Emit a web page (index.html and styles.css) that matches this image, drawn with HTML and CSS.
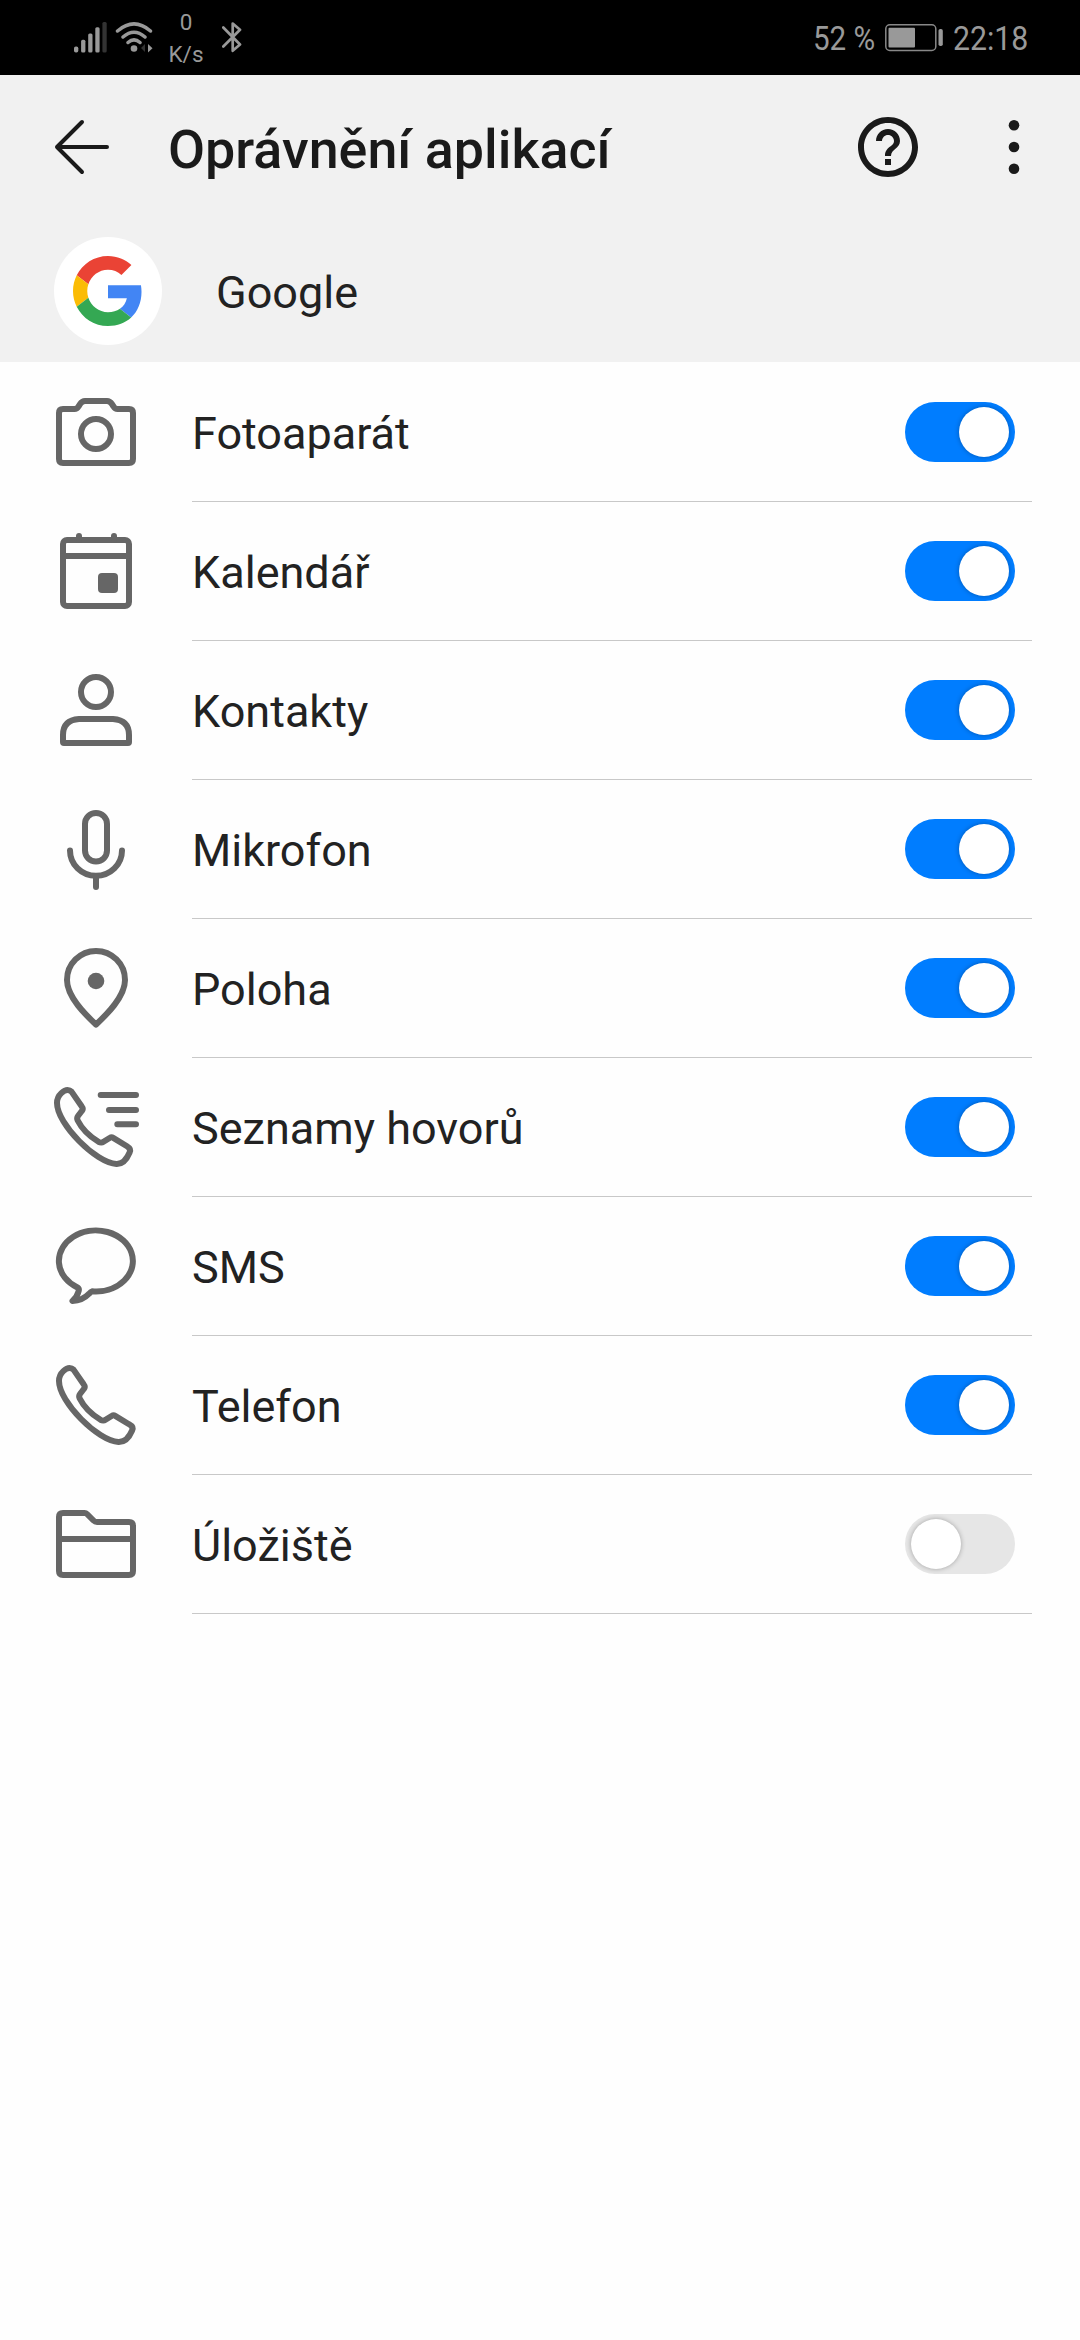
FILE: index.html
```html
<!DOCTYPE html>
<html lang="cs">
<head>
    <meta charset="UTF-8">
    <meta name="viewport" content="width=device-width, initial-scale=1.0">
    <title>Oprávnění aplikací</title>
    <link rel="stylesheet" href="styles.css">
</head>
<body>

<div class="status-bar">
    <div class="status-left">
        <svg class="signal" viewBox="0 0 34 32">
            <rect x="0" y="24.5" width="4.3" height="6" rx="1.8"/>
            <rect x="7.1" y="17.8" width="4.3" height="12.7" rx="1.5"/>
            <rect x="14.2" y="11.5" width="4.3" height="19" rx="1.5"/>
            <rect x="21.3" y="5.3" width="4.3" height="25.2" rx="1.5"/>
            <rect class="dim" x="28.4" y="0" width="4.3" height="30.5" rx="1.5"/>
        </svg>
        <svg class="wifi" viewBox="0 0 38 32">
            <path class="arc" d="M2.5 9Q19 -5.2 35.5 9M8 15Q19 5.5 30 15M13 20.5Q19 15.3 25 20.5"/>
            <circle cx="19" cy="26.5" r="3.3"/>
            <path class="dim" d="M30 22v8l-4-4z"/>
            <path d="M33 22v8.500l4.500-4.200z"/>
        </svg>
        <div class="net-speed"><span>0</span><span>K/s</span></div>
        <svg class="bluetooth" viewBox="0 0 20 32">
            <path d="M1.300 6.500L18 23.500l-7.300 6.300V2.500L18 8.800L1.300 25.500"/>
        </svg>
    </div>
    <div class="status-right">
        <span class="percent">52 %</span>
        <svg class="battery" viewBox="0 0 58 28">
            <rect class="case" x="0.8" y="0.8" width="50" height="25.600" rx="4"/>
            <rect x="3.500" y="3.800" width="26.500" height="19.700" rx="1"/>
            <rect x="53.500" y="5" width="4.300" height="17" rx="1.800"/>
        </svg>
        <span class="clock">22:18</span>
    </div>
</div>

<header class="header">
    <div class="toolbar">
        <svg class="back" viewBox="0 0 56 56">
            <path d="M53 28H3M28 3L3 28l25 25"/>
        </svg>
        <h1>Oprávnění aplikací</h1>
        <svg class="help" viewBox="0 0 24 24">
            <path d="M11 18h2v-2h-2v2zm1-16C6.480 2 2 6.480 2 12s4.480 10 10 10 10-4.480 10-10S17.520 2 12 2zm0 18c-4.410 0-8-3.590-8-8s3.590-8 8-8 8 3.590 8 8-3.590 8-8 8zm0-14c-2.210 0-4 1.790-4 4h2c0-1.100.9-2 2-2s2 .9 2 2c0 2-3 1.750-3 5h2c0-2.250 3-2.500 3-5 0-2.210-1.790-4-4-4z"/>
        </svg>
        <svg class="more" viewBox="0 0 12 56">
            <circle cx="6" cy="6.300" r="5.300"/>
            <circle cx="6" cy="28" r="5.300"/>
            <circle cx="6" cy="49.700" r="5.300"/>
        </svg>
    </div>
    <div class="app">
        <div class="app-icon">
            <svg viewBox="0 0 48 48">
                <path fill="#ea4335" d="M24 9.500c3.540 0 6.710 1.220 9.210 3.600l6.850-6.850C35.900 2.380 30.470 0 24 0 14.620 0 6.510 5.380 2.560 13.220l7.980 6.190C12.430 13.720 17.740 9.500 24 9.500z"/>
                <path fill="#4285f4" d="M46.980 24.550c0-1.570-.15-3.090-.38-4.550H24v9.020h12.940c-.58 2.960-2.260 5.480-4.780 7.180l7.730 6c4.510-4.180 7.090-10.360 7.090-17.650z"/>
                <path fill="#fbbc05" d="M10.530 28.590c-.48-1.450-.76-2.990-.76-4.590s.27-3.140.76-4.590l-7.980-6.190C.92 16.460 0 20.120 0 24c0 3.880.92 7.540 2.560 10.780l7.970-6.190z"/>
                <path fill="#34a853" d="M24 48c6.480 0 11.930-2.130 15.890-5.810l-7.730-6c-2.150 1.450-4.920 2.300-8.160 2.300-6.260 0-11.570-4.220-13.470-9.910l-7.980 6.190C6.510 42.620 14.620 48 24 48z"/>
            </svg>
        </div>
        <span class="app-name">Google</span>
    </div>
</header>

<ul class="permissions">
    <li class="row">
        <svg class="icon" viewBox="0 0 96 96">
            <path d="M15 25h11.500q2.500 0 4-2.500l1.500-2.300q2-3.200 5-3.200h22q3 0 5 3.200l1.500 2.300q1.500 2.500 4 2.500H81q4 0 4 4v46q0 4-4 4H15q-4 0-4-4V29q0-4 4-4z"/>
            <circle cx="48" cy="50" r="15"/>
        </svg>
        <div class="row-body"><span class="label">Fotoaparát</span><span class="switch on"></span></div>
    </li>
    <li class="row">
        <svg class="icon" viewBox="0 0 96 96">
            <rect x="15" y="17" width="66" height="66" rx="4"/>
            <path d="M15 33h66M31 13v4M66 13v4"/>
            <rect class="solid" x="50" y="50" width="20" height="20" rx="4"/>
        </svg>
        <div class="row-body"><span class="label">Kalendář</span><span class="switch on"></span></div>
    </li>
    <li class="row">
        <svg class="icon" viewBox="0 0 96 96">
            <circle cx="48" cy="30" r="15"/>
            <path d="M31 57h34q16 1 16 16v7q0 1-1 1H16q-1 0-1-1v-7q0-15 16-16z"/>
        </svg>
        <div class="row-body"><span class="label">Kontakty</span><span class="switch on"></span></div>
    </li>
    <li class="row">
        <svg class="icon" viewBox="0 0 96 96">
            <rect x="37" y="12" width="22" height="48.500" rx="11"/>
            <path d="M22 49.500A26 25.300 0 0 0 74 49.500M48 75v11"/>
        </svg>
        <div class="row-body"><span class="label">Mikrofon</span><span class="switch on"></span></div>
    </li>
    <li class="row">
        <svg class="icon" viewBox="0 0 96 96">
            <path d="M48 84.500C40 77 19 58 19 40a29 29 0 0 1 58 0C77 58 56 77 48 84.500z"/>
            <circle class="solid" cx="48" cy="41" r="8.300"/>
        </svg>
        <div class="row-body"><span class="label">Poloha</span><span class="switch on"></span></div>
    </li>
    <li class="row">
        <svg class="icon wide" viewBox="0 0 96 96">
            <path d="M23.500 12.600L33.800 27.500q1.800 2.300 0 4.500L30 37q-1.500 2-.3 4.500Q36 54 50.500 62.800q2.800 1.500 5 0L62 58.800q1.500-1 3.200 0L79 67.200q4.500 2.700 2.600 6.300-5 11.800-13.100 11.500C48 84 9 45 9 24 9 15 17 11 19.500 11q2.500 0 4 1.600z"/>
            <path d="M52.700 16H88M61 31h27M69.300 45.300H88"/>
        </svg>
        <div class="row-body"><span class="label">Seznamy hovorů</span><span class="switch on"></span></div>
    </li>
    <li class="row">
        <svg class="icon" viewBox="0 0 96 96">
            <path d="M44 73.300A37 30.500 0 1 0 29 69.200q2.700 1.500 1.400 4.500-1.200 5-5.900 9.300 10-.3 16.500-7.200 1.700-2.200 3-2.500z"/>
        </svg>
        <div class="row-body"><span class="label">SMS</span><span class="switch on"></span></div>
    </li>
    <li class="row">
        <svg class="icon" viewBox="0 0 96 96">
            <path d="M25.500 12.600L35.800 27.500q1.800 2.300 0 4.500L32 37q-1.500 2-.3 4.500Q38 54 52.500 62.800q2.800 1.500 5 0L64 58.800q1.500-1 3.200 0L81 67.200q5 2.700 3.100 6.300-5 11.800-13.600 11.500C50 84 11 45 11 24 11 15 19 11 21.500 11q2.500 0 4 1.600z"/>
        </svg>
        <div class="row-body"><span class="label">Telefon</span><span class="switch on"></span></div>
    </li>
    <li class="row">
        <svg class="icon" viewBox="0 0 96 96">
            <path d="M15 17h21.500q1.500 0 2.500 1l6.500 6.500q1.500 1.500 3.500 1.500h32q4 0 4 4v45q0 4-4 4H15q-4 0-4-4V21q0-4 4-4zM11 43h74"/>
        </svg>
        <div class="row-body"><span class="label">Úložiště</span><span class="switch"></span></div>
    </li>
</ul>

</body>
</html>
```
FILE: styles.css
```css
* { box-sizing: border-box; }
body { margin: 0; width: 1080px; min-height: 2340px; background-color: #fefefe; color: #222; font-family: Roboto, "Noto Sans", sans-serif; }
svg { display: block; flex: none; }

/* Status bar */
.status-bar { display: flex; justify-content: space-between; height: 75px; padding: 0 51px 0 74px; background-color: #000; color: #999; fill: #999; }
.status-left, .status-right { display: flex; align-items: flex-start; }
.signal { width: 34px; height: 32px; margin-top: 22px; }
.wifi { width: 38px; height: 32px; margin: 22px 0 0 7px; }
.wifi .arc { fill: none; stroke: #999; stroke-width: 3.5; stroke-linecap: round; }
.dim { fill: #333; }
.net-speed { display: flex; flex-direction: column; width: 60px; margin: 6px 0 0 3px; font-size: 22.5px; line-height: 32px; text-align: center; }
.bluetooth { width: 20px; height: 32px; margin: 21px 0 0 6px; }
.bluetooth path { fill: none; stroke: #999; stroke-width: 2.7; stroke-linejoin: round; stroke-linecap: round; }
.percent, .clock { font-size: 34px; line-height: 40px; margin-top: 18px; white-space: nowrap; transform-origin: left; }
.percent { width: 61px; transform: scaleX(0.87); }
.clock { width: 76px; margin-left: 10px; transform: scaleX(0.89); }
.battery { width: 58px; height: 28px; margin: 24px 0 0 11px; }
.battery .case { fill: none; stroke: #888; stroke-width: 1.5; }

/* Header */
.header { height: 287px; padding: 0 54px; background-color: #f1f1f1; }
.toolbar { display: flex; align-items: center; height: 144px; }
.back { width: 56px; height: 56px; }
.back path { fill: none; stroke: #1a1a1a; stroke-width: 4; stroke-linecap: round; stroke-linejoin: round; }
h1 { flex: 1; margin: 5px 0 0 58px; font-size: 53.8px; font-weight: 500; line-height: 64px; color: #1a1a1a; white-space: nowrap; }
.help { width: 72px; height: 72px; margin-right: 84px; fill: #1a1a1a; }
.more { width: 12px; height: 56px; margin-right: 6px; fill: #1a1a1a; }
.app { display: flex; align-items: center; height: 108px; margin-top: 18px; }
.app-icon { display: flex; align-items: center; justify-content: center; width: 108px; height: 108px; border-radius: 50%; background-color: #fff; }
.app-icon svg { width: 70px; height: 70px; }
.app-name { margin: 2px 0 0 54px; font-size: 45px; }

/* Permission list */
.permissions { margin: 1px 0 0; padding: 0 48px; list-style: none; }
.row { display: flex; align-items: center; height: 139px; }
.icon { width: 96px; height: 96px; margin-bottom: 1px; fill: none; stroke: #666; stroke-width: 6; stroke-linecap: round; stroke-linejoin: round; }
.icon .solid { fill: #666; stroke: none; }
.row-body { display: flex; flex: 1; align-items: center; justify-content: space-between; height: 139px; margin-left: 48px; padding-right: 17px; border-bottom: 1px solid #c8c8c8; }
.label { padding-top: 3px; font-size: 45px; }
.switch { display: flex; width: 110px; height: 60px; padding: 5px 6px; border-radius: 30px; background-color: #e6e6e6; }
.switch.on { justify-content: flex-end; background-color: #007dff; }
.switch::after { content: ""; width: 50px; height: 50px; border-radius: 50%; background-color: #fff; box-shadow: 0 0 5px rgba(0, 0, 0, 0.3); }
```
